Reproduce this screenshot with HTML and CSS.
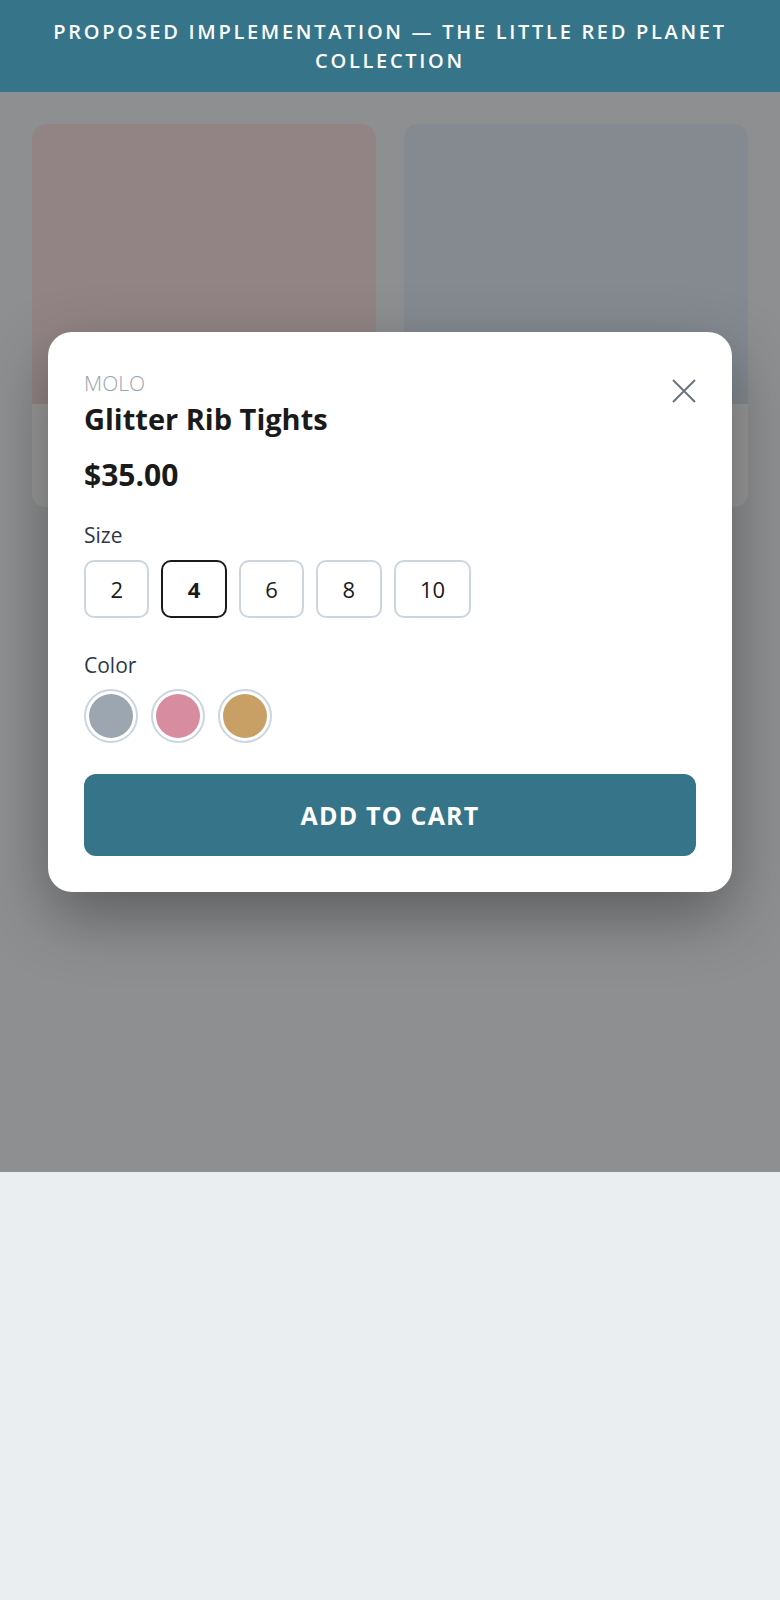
FILE: index.html
```html
<!DOCTYPE html>
<html lang="en">
<head>
    <meta charset="UTF-8">
    <meta name="viewport" content="width=device-width, initial-scale=1.0">
    <title>The Little Red Planet Collection</title>
    <link rel="stylesheet" href="styles.css">
</head>
<body>
    <header class="topbar">
        <h1>Proposed Implementation — The Little Red Planet Collection</h1>
    </header>

    <main class="shop">
        <div class="product-grid">
            <div class="product-card">
                <div class="product-image pink"></div>
                <div class="product-info"></div>
            </div>
            <div class="product-card">
                <div class="product-image blue"></div>
                <div class="product-info"></div>
            </div>
        </div>

        <div class="overlay">
            <div class="modal">
                <div class="modal-head">
                    <div>
                        <p class="brand">MOLO</p>
                        <h2 class="title">Glitter Rib Tights</h2>
                    </div>
                    <button class="close" aria-label="Close">
                        <svg width="24" height="24" viewBox="0 0 24 24" fill="none" stroke="currentColor" stroke-width="2">
                            <path d="M1 1L23 23M23 1L1 23"/>
                        </svg>
                    </button>
                </div>

                <p class="price">$35.00</p>

                <div class="option">
                    <span class="option-label">Size</span>
                    <div class="sizes">
                        <button class="size">2</button>
                        <button class="size selected">4</button>
                        <button class="size">6</button>
                        <button class="size">8</button>
                        <button class="size">10</button>
                    </div>
                </div>

                <div class="option">
                    <span class="option-label">Color</span>
                    <div class="swatches">
                        <button class="swatch"><span class="dot grey"></span></button>
                        <button class="swatch"><span class="dot rose"></span></button>
                        <button class="swatch"><span class="dot tan"></span></button>
                    </div>
                </div>

                <button class="add-to-cart">Add to Cart</button>
            </div>
        </div>
    </main>
</body>
</html>
```

FILE: styles.css
```css
body {
    margin: 0;
    font-family: "Segoe UI", "Open Sans", sans-serif;
    background-color: #ebeef1;
    color: #1a1a1a;
}
.topbar {
    background-color: #367589;
    padding: 17px 20px;
}
.topbar h1 {
    margin: 0;
    color: #fff;
    font-size: 20px;
    font-weight: 600;
    line-height: 29px;
    letter-spacing: 2.7px;
    text-transform: uppercase;
    text-align: center;
}
.shop {
    position: relative;
    min-height: 1080px;
}
.product-grid {
    display: grid;
    grid-template-columns: 1fr 1fr;
    gap: 28px;
    padding: 32px;
}
.product-card {
    background-color: #fff;
    border-radius: 14px;
    overflow: hidden;
}
.product-image {
    height: 280px;
}
.product-image.pink {
    background-color: #f3dcdc;
}
.product-image.blue {
    background-color: #dce6f0;
}
.product-info {
    height: 103px;
}
.overlay {
    position: absolute;
    top: 0;
    left: 0;
    right: 0;
    bottom: 0;
    background-color: rgba(0, 0, 0, 0.4);
    padding: 240px 48px 0;
}
.modal {
    background-color: #fff;
    border-radius: 24px;
    padding: 36px;
    box-shadow: 0 24px 64px rgba(0, 0, 0, 0.35);
}
.modal-head {
    display: flex;
    justify-content: space-between;
    align-items: flex-start;
}
.brand {
    margin: 0;
    font-size: 21px;
    font-weight: 300;
    line-height: 30px;
    color: #9ca3af;
}
.title {
    margin: 1px 0 0;
    font-size: 29px;
    line-height: 40px;
    font-weight: 700;
}
.close {
    background: none;
    border: none;
    padding: 0;
    margin-top: 11px;
    color: #6b7280;
    cursor: pointer;
}
.close svg {
    display: block;
}
.price {
    margin: 15px 0 0;
    font-size: 30px;
    line-height: 42px;
    font-weight: 700;
}
.option {
    margin-top: 24px;
}
.option + .option {
    margin-top: 32px;
}
.option-label {
    display: block;
    font-size: 21px;
    line-height: 30px;
    font-weight: 500;
    color: #2d3748;
}
.sizes {
    display: flex;
    gap: 12px;
    margin-top: 10px;
}
.size {
    height: 58px;
    padding: 0 24.4px;
    background: #fff;
    border: 2px solid #cbd5e0;
    border-radius: 10px;
    font-family: inherit;
    font-size: 22px;
    color: #1a1a1a;
    cursor: pointer;
}
.size.selected {
    border-color: #1a1a1a;
    font-weight: 700;
}
.swatches {
    display: flex;
    gap: 13px;
    margin-top: 9px;
}
.swatch {
    width: 54px;
    height: 54px;
    padding: 3px;
    background: #fff;
    border: 2px solid #cbd5e0;
    border-radius: 50%;
    cursor: pointer;
}
.dot {
    display: block;
    width: 100%;
    height: 100%;
    border-radius: 50%;
}
.dot.grey {
    background-color: #9ca6b0;
}
.dot.rose {
    background-color: #d88ca0;
}
.dot.tan {
    background-color: #c8a065;
}
.add-to-cart {
    display: block;
    width: 100%;
    height: 82px;
    margin-top: 31px;
    background-color: #367589;
    color: #fff;
    border: none;
    border-radius: 12px;
    font-family: inherit;
    font-size: 25px;
    font-weight: 700;
    letter-spacing: 1.2px;
    text-transform: uppercase;
    cursor: pointer;
}
```
